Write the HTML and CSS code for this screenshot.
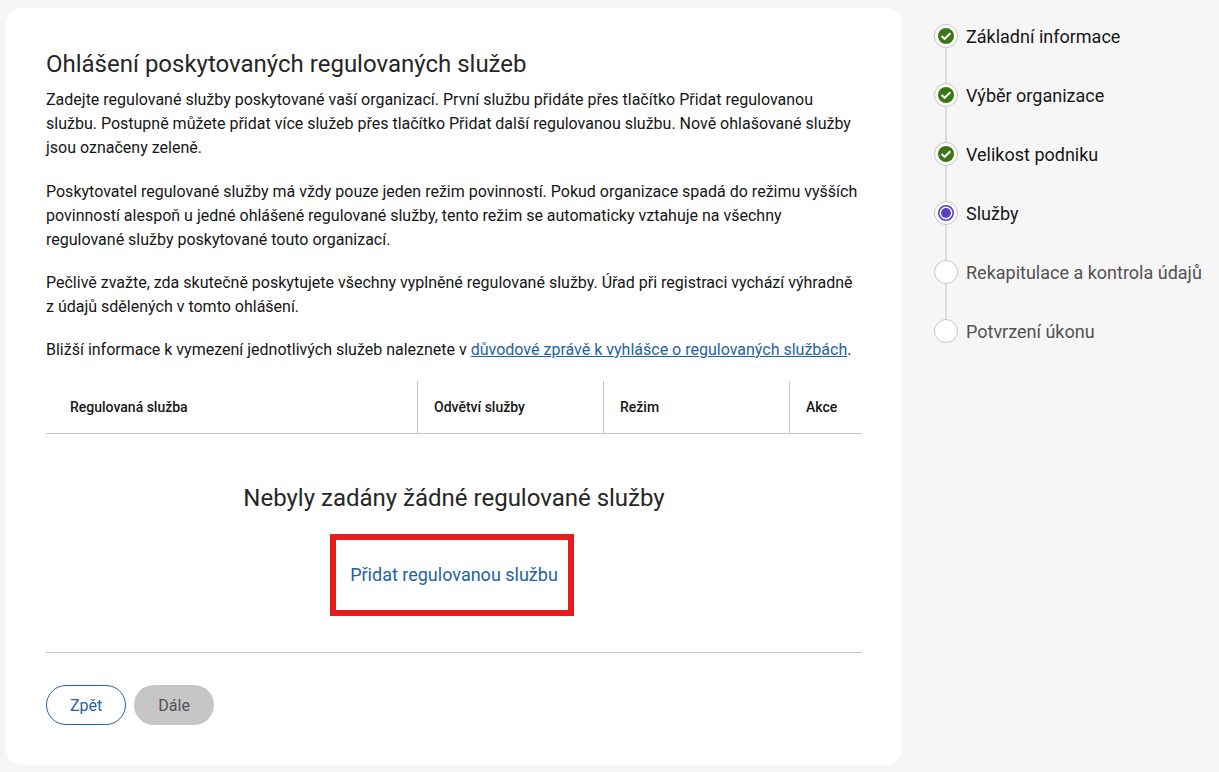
FILE: index.html
```html
<!DOCTYPE html>
<html lang="cs">
<head>
  <meta charset="utf-8">
  <meta name="viewport" content="width=device-width, initial-scale=1">
  <title>Ohlášení poskytovaných regulovaných služeb</title>
  <link rel="stylesheet" href="styles.css">
</head>
<body>
  <div class="page">
    <main class="card">
      <h1 class="title">Ohlášení poskytovaných regulovaných služeb</h1>
      <div class="intro">
        <p class="lead">Zadejte regulované služby poskytované vaší organizací. První službu přidáte přes tlačítko Přidat regulovanou službu. Postupně můžete přidat více služeb přes tlačítko Přidat další regulovanou službu. Nově ohlašované služby jsou označeny zeleně.</p>
        <p>Poskytovatel regulované služby má vždy pouze jeden režim povinností. Pokud organizace spadá do režimu vyšších povinností alespoň u jedné ohlášené regulované služby, tento režim se automaticky vztahuje na všechny regulované služby poskytované touto organizací.</p>
        <p>Pečlivě zvažte, zda skutečně poskytujete všechny vyplněné regulované služby. Úřad při registraci vychází výhradně z&nbsp;údajů sdělených v tomto ohlášení.</p>
        <p>Bližší informace k vymezení jednotlivých služeb naleznete v <a class="link" href="#">důvodové zprávě k vyhlášce o regulovaných službách</a>.</p>
      </div>
      <table class="services">
        <colgroup>
          <col class="col-service">
          <col class="col-mid">
          <col class="col-mid">
          <col class="col-action">
        </colgroup>
        <thead>
          <tr>
            <th scope="col">Regulovaná služba</th>
            <th scope="col">Odvětví služby</th>
            <th scope="col">Režim</th>
            <th scope="col">Akce</th>
          </tr>
        </thead>
      </table>
      <section class="empty">
        <h2 class="title">Nebyly zadány žádné regulované služby</h2>
        <button class="add" type="button">Přidat regulovanou službu</button>
      </section>
      <div class="actions">
        <button class="btn btn-outline" type="button">Zpět</button>
        <button class="btn btn-disabled" type="button" disabled>Dále</button>
      </div>
    </main>
    <nav class="steps" aria-label="Kroky">
      <ol class="step-list">
        <li class="step">
          <span class="dot"><svg viewBox="0 0 16 16" width="16" height="16" aria-hidden="true"><circle class="done-fill" cx="8" cy="8" r="8"/><path class="tick" d="M3.5 7.9 6.6 10.8 12.4 5.2"/></svg></span>
          <span class="label">Základní informace</span>
        </li>
        <li class="step">
          <span class="dot"><svg viewBox="0 0 16 16" width="16" height="16" aria-hidden="true"><circle class="done-fill" cx="8" cy="8" r="8"/><path class="tick" d="M3.5 7.9 6.6 10.8 12.4 5.2"/></svg></span>
          <span class="label">Výběr organizace</span>
        </li>
        <li class="step">
          <span class="dot"><svg viewBox="0 0 16 16" width="16" height="16" aria-hidden="true"><circle class="done-fill" cx="8" cy="8" r="8"/><path class="tick" d="M3.5 7.9 6.6 10.8 12.4 5.2"/></svg></span>
          <span class="label">Velikost podniku</span>
        </li>
        <li class="step" aria-current="step">
          <span class="dot"><svg viewBox="0 0 16 16" width="16" height="16" aria-hidden="true"><circle class="current-ring" cx="8" cy="8" r="7.2"/><circle class="current-fill" cx="8" cy="8" r="5"/></svg></span>
          <span class="label">Služby</span>
        </li>
        <li class="step step-pending">
          <span class="dot"></span>
          <span class="label">Rekapitulace a kontrola údajů</span>
        </li>
        <li class="step step-pending">
          <span class="dot"></span>
          <span class="label">Potvrzení úkonu</span>
        </li>
      </ol>
    </nav>
  </div>
</body>
</html>
```
FILE: styles.css
```css
* {
  box-sizing: border-box;
}

body {
  margin: 0;
  background: #f6f6f6;
  color: #161616;
  font-family: Roboto, "Noto Sans", sans-serif;
  font-size: 16px;
  line-height: 24px;
}

button {
  font-family: inherit;
  cursor: pointer;
}

.page {
  display: flex;
  align-items: flex-start;
  gap: 32px;
  padding: 8px 16px 7px 6px;
}

.card {
  flex: 1;
  min-width: 0;
  padding: 40px;
  border-radius: 16px;
  background: #fff;
}

.title {
  margin: 0;
  color: #262626;
  font-size: 24px;
  font-weight: 400;
  line-height: 32px;
}

.intro {
  padding-top: 8px;
}

.intro p {
  margin: 0 0 19px;
}

.intro .lead {
  margin-bottom: 20px;
}

.link {
  color: #2362a2;
}

.services {
  width: 100%;
  table-layout: fixed;
  border-collapse: separate;
  border-spacing: 0;
}

.col-mid {
  width: 186px;
}

.col-action {
  width: 72px;
}

.services th {
  height: 53px;
  padding: 0 16px;
  border-bottom: 1px solid #c6c6c6;
  font-size: 14px;
  font-weight: 500;
  text-align: left;
}

.services th:first-child {
  padding-left: 24px;
}

.services th:not(:last-child) {
  border-right: 1px solid #c6c6c6;
}

.empty {
  display: flex;
  flex-direction: column;
  align-items: center;
  gap: 20px;
  padding: 48px 0 38px;
  border-bottom: 1px solid #c6c6c6;
}

.add {
  position: relative;
  height: 80px;
  padding: 0 20px;
  border: 0;
  background: none;
  color: #2362a2;
  font-size: 18px;
}

/* Highlight frame around the button */
.add::after {
  content: "";
  position: absolute;
  inset: 0 4px -2px 0;
  border: 6px solid #e81c1c;
}

.actions {
  display: flex;
  gap: 8px;
  padding-top: 32px;
}

.btn {
  height: 40px;
  padding: 0 23px;
  border: 1px solid transparent;
  border-radius: 20px;
  font-size: 16px;
}

.btn-outline {
  border-color: #2362a2;
  background: #fff;
  color: #2362a2;
}

.btn-disabled {
  background: #c6c6c6;
  color: #525252;
  cursor: default;
}

.steps {
  flex: 0 0 269px;
  padding-top: 16px;
}

.step-list {
  display: flex;
  flex-direction: column;
  gap: 33px;
  margin: 0;
  padding: 0;
  list-style: none;
}

.step {
  position: relative;
  display: flex;
  gap: 8px;
  font-size: 18px;
}

.label {
  line-height: 26px;
}

.step-pending {
  color: #525252;
}

/* Connector to the following step */
.step:not(:last-child)::after {
  content: "";
  position: absolute;
  top: 24px;
  left: 11px;
  width: 2px;
  height: 35px;
  background: #dcdcdc;
}

.dot {
  display: flex;
  align-items: center;
  justify-content: center;
  width: 24px;
  height: 24px;
  border: 1px solid #c6c6c6;
  border-radius: 50%;
  background: #fff;
}

.done-fill {
  fill: #3c7614;
}

.tick {
  fill: none;
  stroke: #fff;
  stroke-width: 2;
}

.current-ring {
  fill: none;
  stroke: #5a3fc0;
  stroke-width: 1.6;
}

.current-fill {
  fill: #5a3fc0;
}
```
